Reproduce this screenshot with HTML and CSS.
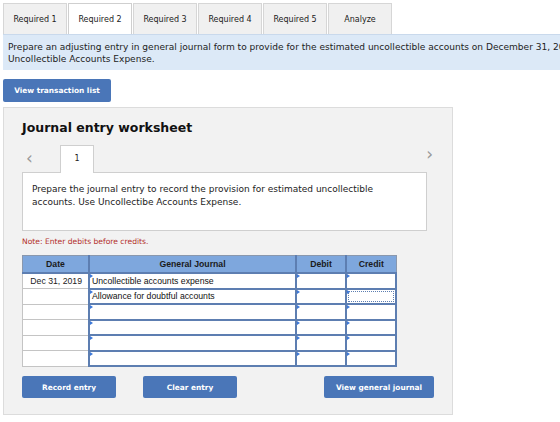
FILE: index.html
```html
<!DOCTYPE html>
<html lang="en">
<head>
    <meta charset="UTF-8">
    <title>Journal entry worksheet</title>
    <link rel="stylesheet" href="styles.css">
</head>
<body>
    <div class="tabs">
        <div class="tab">Required 1</div>
        <div class="tab active">Required 2</div>
        <div class="tab">Required 3</div>
        <div class="tab">Required 4</div>
        <div class="tab">Required 5</div>
        <div class="tab">Analyze</div>
    </div>
    <div class="banner">
        Prepare an adjusting entry in general journal form to provide for the estimated uncollectible accounts on December 31, 2019.<br>
        Uncollectible Accounts Expense.
    </div>
    <button class="btn btn-list">View transaction list</button>

    <div class="panel">
        <h2>Journal entry worksheet</h2>
        <div class="pager">
            <span class="arrow">&lsaquo;</span>
            <div class="page-tab">1</div>
            <span class="arrow right">&rsaquo;</span>
        </div>
        <div class="prompt">
            Prepare the journal entry to record the provision for estimated uncollectible accounts. Use Uncollectibe Accounts Expense.
        </div>
        <p class="note">Note: Enter debits before credits.</p>

        <table class="journal">
            <thead>
                <tr>
                    <th class="c-date">Date</th>
                    <th class="c-acct">General Journal</th>
                    <th class="c-amt">Debit</th>
                    <th class="c-amt">Credit</th>
                </tr>
            </thead>
            <tbody>
                <tr>
                    <td class="c-date">Dec 31, 2019</td>
                    <td class="cell">Uncollectible accounts expense</td>
                    <td class="cell"></td>
                    <td class="cell"></td>
                </tr>
                <tr>
                    <td class="c-date"></td>
                    <td class="cell">Allowance for doubtful accounts</td>
                    <td class="cell"></td>
                    <td class="cell focus"></td>
                </tr>
                <tr>
                    <td class="c-date"></td>
                    <td class="cell"></td>
                    <td class="cell"></td>
                    <td class="cell"></td>
                </tr>
                <tr>
                    <td class="c-date"></td>
                    <td class="cell"></td>
                    <td class="cell"></td>
                    <td class="cell"></td>
                </tr>
                <tr>
                    <td class="c-date"></td>
                    <td class="cell"></td>
                    <td class="cell"></td>
                    <td class="cell"></td>
                </tr>
                <tr>
                    <td class="c-date"></td>
                    <td class="cell"></td>
                    <td class="cell"></td>
                    <td class="cell"></td>
                </tr>
            </tbody>
        </table>

        <div class="actions">
            <button class="btn btn-action">Record entry</button>
            <button class="btn btn-action btn-clear">Clear entry</button>
            <button class="btn btn-view">View general journal</button>
        </div>
    </div>
</body>
</html>
```

FILE: styles.css
```css
html {
    overflow: hidden;
}
body {
    margin: 0;
    padding: 3px 0 0 3px;
    font-family: "DejaVu Sans", Verdana, sans-serif;
    color: #222;
    width: 640px;
    overflow: hidden;
}
.tabs {
    display: flex;
    height: 31px;
}
.tab {
    width: 64px;
    box-sizing: border-box;
    border: 1px solid #d6d6d6;
    border-bottom: none;
    background: #f0f0f0;
    font-size: 8px;
    display: flex;
    align-items: center;
    justify-content: center;
    margin-right: 1px;
}
.tab.active {
    background: #fff;
    border-color: #cfcfcf;
}
.banner {
    background: #dce9f7;
    border-top: 1px solid #c9d9ec;
    height: 36px;
    box-sizing: border-box;
    padding: 6px 5px;
    font-size: 9.05px;
    line-height: 12px;
    overflow: hidden;
    white-space: nowrap;
    width: 620px;
}
.btn {
    display: block;
    border: none;
    background: #4a76b8;
    color: #fff;
    font-family: "DejaVu Sans", Verdana, sans-serif;
    font-weight: bold;
    font-size: 7.4px;
    border-radius: 2px;
    padding: 0;
}
.btn-list {
    margin-top: 9px;
    width: 108px;
    height: 23px;
}
.panel {
    margin-top: 5px;
    width: 450px;
    height: 308px;
    box-sizing: border-box;
    background: #f2f2f2;
    border: 1px solid #dcdcdc;
    padding: 12px 0 0 18px;
}
.panel h2 {
    margin: 0;
    font-size: 12.5px;
    font-weight: bold;
    color: #111;
}
.pager {
    display: flex;
    align-items: flex-end;
    margin-top: 9px;
    height: 28px;
    width: 406px;
}
.arrow {
    color: #999;
    font-size: 17px;
    line-height: 17px;
    width: 34px;
    padding-left: 4px;
    align-self: center;
}
.arrow.right {
    margin-left: auto;
    width: auto;
    padding-left: 0;
    margin-right: -5px;
    align-self: flex-start;
    margin-top: 2px;
}
.page-tab {
    width: 34px;
    height: 28px;
    box-sizing: border-box;
    background: #fff;
    border: 1px solid #cfcfcf;
    border-bottom: none;
    font-size: 8px;
    display: flex;
    justify-content: center;
    padding-top: 8px;
    margin-bottom: -1px;
    position: relative;
}
.prompt {
    width: 405px;
    height: 59px;
    box-sizing: border-box;
    background: #fff;
    border: 1px solid #cfcfcf;
    padding: 10px 24px 10px 9px;
    font-size: 9px;
    line-height: 13px;
}
.note {
    margin: 6px 0 0;
    font-size: 7.6px;
    color: #b3302b;
}
.journal {
    margin-top: 9px;
    border-collapse: collapse;
    width: 375px;
    font-family: "Liberation Sans", Arial, sans-serif;
    font-size: 8.7px;
    table-layout: fixed;
    border: 1px solid #8a98ad;
}
.journal th {
    background: #7ea7dd;
    height: 16px;
    padding: 0;
    font-weight: bold;
    color: #1a1a1a;
    border: 1px solid #5d7eb1;
    border-width: 0 2px 2px 0;
}
.journal th:last-child {
    border-right: 1px solid #8a98ad;
}
.c-date {
    width: 65px;
}
.c-acct {
    width: 205px;
}
.journal td {
    height: 13.5px;
    padding: 0 0 0 2px;
    white-space: nowrap;
    background: #fff;
}
.journal td.c-date {
    text-align: right;
    padding-right: 6px;
    border: 1px solid #c4c4c4;
    border-right: 2px solid #5d7eb1;
}
.journal td.cell {
    border: 2px solid #5d7eb1;
    border-width: 0 2px 2px 0;
    position: relative;
    color: #111;
}
.journal td.cell::before {
    content: "";
    position: absolute;
    left: 0;
    top: 0;
    border-left: 3px solid #3c78d8;
    border-top: 2px solid transparent;
    border-bottom: 2px solid transparent;
}
.journal td.focus {
    outline: 1px dotted #5d7eb1;
    outline-offset: -3px;
}
.actions {
    display: flex;
    margin-top: 9px;
    width: 412px;
}
.btn-action {
    width: 94px;
    height: 22px;
}
.btn-clear {
    margin-left: 27px;
}
.btn-view {
    margin-left: auto;
    width: 110px;
    height: 22px;
}
```
